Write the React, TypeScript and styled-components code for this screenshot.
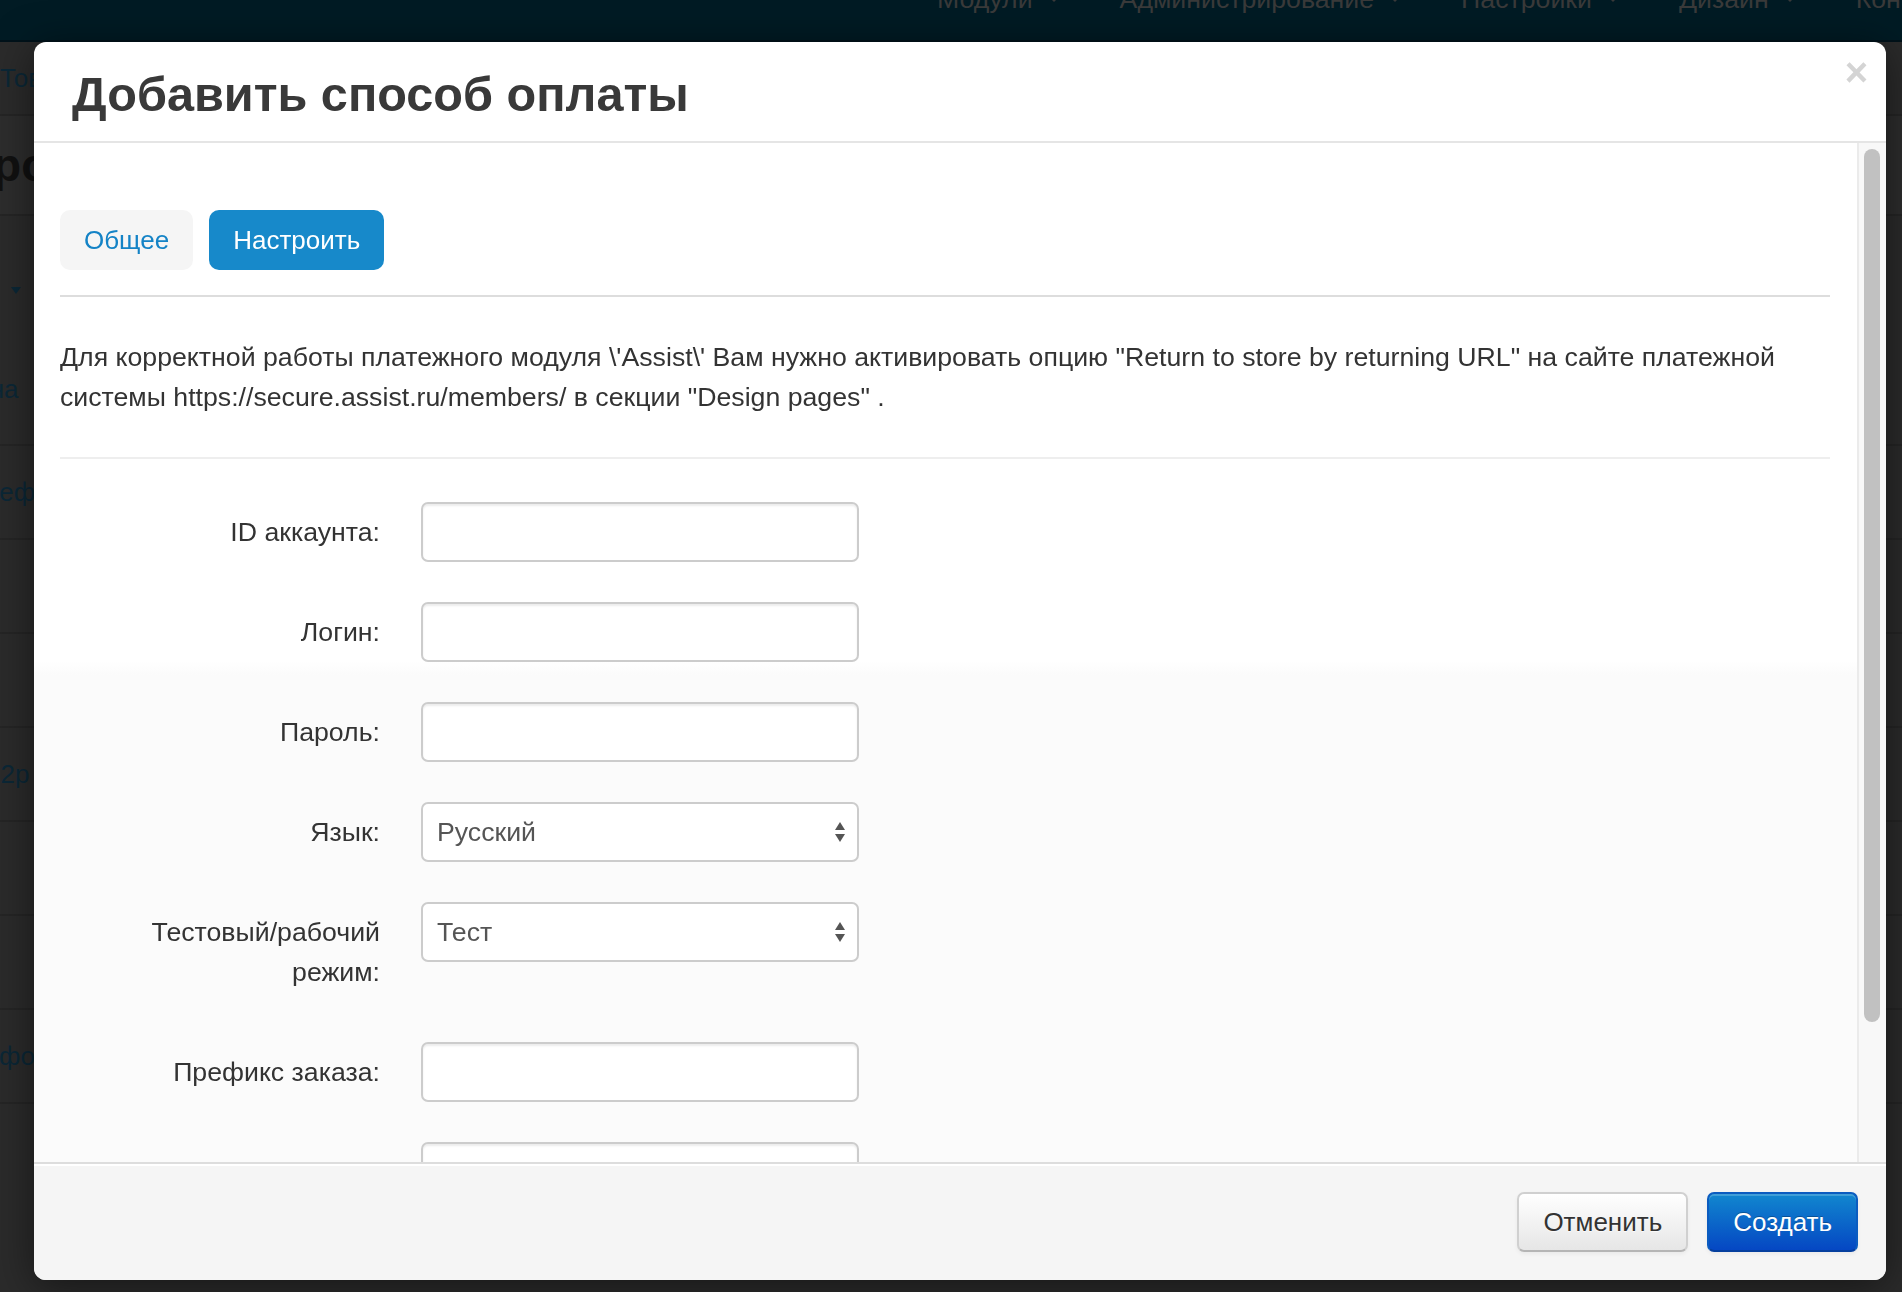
import React from 'react'
import styled, { createGlobalStyle } from 'styled-components'

const GlobalStyle = createGlobalStyle`
  html, body {
    margin: 0;
    padding: 0;
  }
  body {
    width: 1902px;
    height: 1292px;
    overflow: hidden;
    background: #2b2b2b;
    font-family: 'Liberation Sans', Arial, sans-serif;
  }
  * {
    box-sizing: border-box;
  }
`

/* ---------- dimmed page behind the modal ---------- */

const Page = styled.div`
  width: 1902px;
  height: 1292px;
  overflow: hidden;
`

const Navbar = styled.div`
  height: 42px;
  background: #011b24;
  border-bottom: 2px solid #00121a;
  overflow: hidden;
`

const NavList = styled.div`
  display: flex;
  margin: -21px 0 0 907px;
  white-space: nowrap;
`

const NavItem = styled.div`
  display: flex;
  align-items: flex-start;
  gap: 15px;
  padding: 0 30px;
  height: 60px;
  line-height: 40px;
  font-size: 26.7px;
  color: #3a3a3a;
`

const NavCaret = styled.span`
  margin-top: 17px;
  width: 0;
  height: 0;
  border-left: 6px solid transparent;
  border-right: 6px solid transparent;
  border-top: 6px solid #3a3a3a;
`

const NavDivider = styled.div`
  width: 2px;
  height: 62px;
  background: #052531;
`

const BackRow = styled.div<{ $h: number; $bg?: string }>`
  height: ${p => p.$h}px;
  display: flex;
  align-items: center;
  background: ${p => p.$bg || '#2b2b2b'};
  border-bottom: 2px solid #252525;
  overflow: hidden;
  white-space: nowrap;
`

const BackLink = styled.span<{ $shift?: number }>`
  margin-left: ${p => p.$shift || 0}px;
  font-size: 26px;
  color: #0b2736;
`

const BackHeading = styled.span`
  margin-left: -40px;
  font-size: 46px;
  font-weight: 700;
  color: #111;
`

const FilterBlock = styled.div`
  height: 230px;
  display: flex;
  flex-direction: column;
  border-bottom: 2px solid #252525;
  overflow: hidden;
  white-space: nowrap;
`

const FilterCaret = styled.span`
  margin: 71px 0 0 11px;
  width: 0;
  height: 0;
  border-left: 5px solid transparent;
  border-right: 5px solid transparent;
  border-top: 7px solid #0b2736;
`

const FilterText = styled.span`
  margin: 80px 0 0 -44px;
  font-size: 26px;
  color: #0b2736;
`

/* ---------- modal ---------- */

const Modal = styled.div`
  position: fixed;
  top: 42px;
  left: 34px;
  width: 1852px;
  height: 1238px;
  display: flex;
  flex-direction: column;
  background: #fff;
  border-radius: 12px;
  box-shadow: 0 6px 40px rgba(0, 0, 0, 0.5);
  overflow: hidden;
`

const ModalHeader = styled.div`
  flex: none;
  height: 101px;
  display: flex;
  align-items: center;
  justify-content: space-between;
  padding: 4px 18px 0 38px;
  border-bottom: 2px solid #e5e5e5;
`

const ModalTitle = styled.h3`
  margin: 0;
  font-size: 48.6px;
  line-height: 58px;
  font-weight: 700;
  color: #393939;
`

const CloseButton = styled.span`
  align-self: flex-start;
  margin-top: 6px;
  font-size: 40px;
  line-height: 40px;
  font-weight: 700;
  color: #d4d4d4;
  cursor: pointer;
`

const ModalBody = styled.div`
  flex: 1;
  min-height: 0;
  display: flex;
`

const Content = styled.div`
  flex: 1;
  overflow: hidden;
  padding: 67px 27px 0 26px;
  background: linear-gradient(#fff 0, #fff 518px, #fbfbfb 532px);
`

const ScrollTrack = styled.div`
  flex: none;
  width: 29px;
  padding: 6px 6px 0 5px;
  background: #f8f8f8;
  border-left: 2px solid #ebebeb;
`

const ScrollThumb = styled.div`
  height: 873px;
  border-radius: 8px;
  background: #c1c1c1;
`

const TabBar = styled.div`
  display: flex;
  gap: 16px;
`

const Tab = styled.button<{ $active?: boolean }>`
  height: 60px;
  padding: 0 24px;
  border: none;
  border-radius: 10px;
  font-family: inherit;
  font-size: 26px;
  background: ${p => (p.$active ? '#1789ca' : '#f5f5f5')};
  color: ${p => (p.$active ? '#fff' : '#1483c6')};
  cursor: pointer;
`

const Divider = styled.div<{ $light?: boolean }>`
  height: 2px;
  background: ${p => (p.$light ? '#eeeeee' : '#dddddd')};
`

const TabDivider = styled(Divider)`
  margin-top: 25px;
`

const Notice = styled.p`
  margin: 40px 0;
  font-size: 26.7px;
  line-height: 40px;
  color: #333;
`

const Form = styled.div`
  margin-top: 43px;
`

const FieldRow = styled.div`
  display: flex;
  align-items: flex-start;
  margin-bottom: 40px;
`

const FieldLabel = styled.label`
  flex: none;
  width: 320px;
  padding: 10px 0 10px 60px;
  text-align: right;
  font-size: 26.7px;
  line-height: 40px;
  color: #333;
`

const Control = styled.div`
  margin-left: 41px;
  position: relative;
`

const TextInput = styled.input`
  display: block;
  width: 438px;
  height: 60px;
  padding: 0 14px;
  border: 2px solid #cccccc;
  border-radius: 7px;
  box-shadow: inset 0 2px 2px rgba(0, 0, 0, 0.075);
  font-family: inherit;
  font-size: 26.7px;
  color: #555;
  background: #fff;
  outline: none;
`

const Select = styled.select`
  display: block;
  width: 438px;
  height: 60px;
  padding: 0 14px;
  border: 2px solid #cccccc;
  border-radius: 7px;
  font-family: inherit;
  font-size: 26.7px;
  color: #555;
  background: #fff;
  appearance: none;
  -webkit-appearance: none;
  outline: none;
`

const SelectArrows = styled.svg`
  position: absolute;
  right: 14px;
  top: 19px;
  pointer-events: none;
`

const ModalFooter = styled.div`
  flex: none;
  height: 118px;
  display: flex;
  align-items: center;
  justify-content: flex-end;
  gap: 19px;
  padding: 0 28px;
  background: #f5f5f5;
  border-top: 2px solid #dddddd;
  box-shadow: inset 0 2px 0 #fff;
`

const Button = styled.button<{ $primary?: boolean }>`
  height: 60px;
  padding: 0 24px;
  border-radius: 7px;
  border: 2px solid;
  font-family: inherit;
  font-size: 26px;
  cursor: pointer;
  color: ${p => (p.$primary ? '#fff' : '#333')};
  background: ${p =>
    p.$primary
      ? 'linear-gradient(#1187cf, #0547c3)'
      : 'linear-gradient(#ffffff, #e6e6e6)'};
  border-color: ${p =>
    p.$primary ? '#0b5cc0 #0b5cc0 #053f9e' : '#d0d0d0 #d0d0d0 #b5b5b5'};
  text-shadow: ${p =>
    p.$primary ? '0 -1px 0 rgba(0,0,0,.25)' : '0 1px 1px rgba(255,255,255,.75)'};
  box-shadow: inset 0 2px 0 rgba(255, 255, 255, 0.2), 0 2px 4px rgba(0, 0, 0, 0.05);
`

const Arrows: React.FC = () => (
  <SelectArrows width="10" height="22" viewBox="0 0 10 22">
    <path d="M0 9 L5 1 L10 9 Z" fill="#555" />
    <path d="M0 13 L10 13 L5 21 Z" fill="#555" />
  </SelectArrows>
)

const fields = [
  { label: 'ID аккаунта:', type: 'text' },
  { label: 'Логин:', type: 'text' },
  { label: 'Пароль:', type: 'text' },
  { label: 'Язык:', type: 'select', options: ['Русский', 'English'] },
  { label: 'Тестовый/рабочий режим:', type: 'select', options: ['Тест', 'Рабочий'] },
  { label: 'Префикс заказа:', type: 'text' },
  { label: 'Секретное слово:', type: 'text' },
  { label: 'Валюта:', type: 'text' },
]

const backRows: { text?: string; shift?: number }[] = [
  { text: 'Телефон', shift: -44 },
  {},
  {},
  { text: '12р', shift: -14 },
  {},
  {},
  { text: 'Информация', shift: -34 },
]

const App: React.FC = () => {
  return (
    <Page>
      <GlobalStyle />
      <Navbar>
        <NavList>
          <NavItem>Модули<NavCaret /></NavItem>
          <NavDivider />
          <NavItem>Администрирование<NavCaret /></NavItem>
          <NavItem>Настройки<NavCaret /></NavItem>
          <NavItem>Дизайн<NavCaret /></NavItem>
          <NavDivider />
          <NavItem>Контакты</NavItem>
        </NavList>
      </Navbar>

      <BackRow $h={74}><BackLink>Товары</BackLink></BackRow>
      <BackRow $h={100} $bg="#2d2d2d"><BackHeading>Провайдеры</BackHeading></BackRow>
      <FilterBlock>
        <FilterCaret />
        <FilterText>Цена</FilterText>
      </FilterBlock>
      {backRows.map((r, i) => (
        <BackRow key={i} $h={94}>
          {r.text && <BackLink $shift={r.shift}>{r.text}</BackLink>}
        </BackRow>
      ))}

      <Modal>
        <ModalHeader>
          <ModalTitle>Добавить способ оплаты</ModalTitle>
          <CloseButton>×</CloseButton>
        </ModalHeader>

        <ModalBody>
          <Content>
            <TabBar>
              <Tab>Общее</Tab>
              <Tab $active>Настроить</Tab>
            </TabBar>
            <TabDivider />
            <Notice>
              Для корректной работы платежного модуля \'Assist\' Вам нужно активировать опцию "Return to
              store by returning URL" на сайте платежной системы https://secure.assist.ru/members/ в
              секции "Design pages" .
            </Notice>
            <Divider $light />
            <Form>
              {fields.map(f => (
                <FieldRow key={f.label}>
                  <FieldLabel>{f.label}</FieldLabel>
                  <Control>
                    {f.type === 'select' ? (
                      <>
                        <Select defaultValue={f.options![0]}>
                          {f.options!.map(o => (
                            <option key={o}>{o}</option>
                          ))}
                        </Select>
                        <Arrows />
                      </>
                    ) : (
                      <TextInput type="text" />
                    )}
                  </Control>
                </FieldRow>
              ))}
            </Form>
          </Content>
          <ScrollTrack>
            <ScrollThumb />
          </ScrollTrack>
        </ModalBody>

        <ModalFooter>
          <Button>Отменить</Button>
          <Button $primary>Создать</Button>
        </ModalFooter>
      </Modal>
    </Page>
  )
}

export default App
